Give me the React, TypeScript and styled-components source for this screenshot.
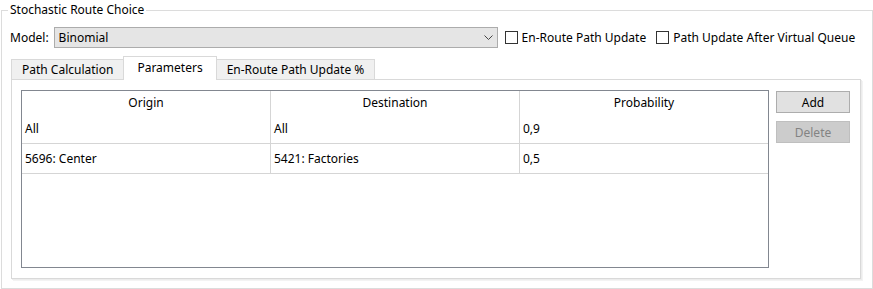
import React from 'react';
import styled, { createGlobalStyle } from 'styled-components';

const GlobalStyle = createGlobalStyle`
  html, body {
    margin: 0;
    padding: 0;
    background: #ffffff;
  }
  body {
    font-family: "Noto Sans", "Open Sans", sans-serif;
    font-size: 12px;
    color: #000;
  }
`;

const Page = styled.div`
  width: 873px;
  height: 289px;
  padding: 2px 0 0 1px;
  box-sizing: border-box;
`;

const GroupBox = styled.fieldset`
  margin: 0;
  width: 872px;
  height: 287px;
  box-sizing: border-box;
  border: 1px solid #dcdcdc;
  padding: 9px 9px 0 9px;
  display: flex;
  flex-direction: column;
`;

const Legend = styled.legend`
  padding: 0 2px;
  margin-left: -3px;
  line-height: 16px;
`;

const TopRow = styled.div`
  display: flex;
  align-items: center;
  height: 21px;
`;

const Label = styled.span`
  margin: 0 5px 0 -1px;
`;

const Combo = styled.div`
  width: 444px;
  height: 21px;
  box-sizing: border-box;
  background: #e5e5e5;
  border: 1px solid #acacac;
  display: flex;
  align-items: center;
  padding: 0 4px;
  justify-content: space-between;
`;

const Check = styled.label<{ $gap?: number }>`
  display: flex;
  align-items: center;
  margin-left: ${(p) => p.$gap ?? 7}px;
`;

const Box = styled.span`
  width: 13px;
  height: 13px;
  box-sizing: border-box;
  border: 1px solid #333;
  background: #fff;
  margin-right: 4px;
`;

const TabBar = styled.div`
  display: flex;
  align-items: flex-end;
  height: 24px;
  margin-top: 8px;
`;

const Tab = styled.div<{ $active?: boolean }>`
  height: ${(p) => (p.$active ? '24px' : '21px')};
  box-sizing: border-box;
  padding: ${(p) => (p.$active ? '0 13px 3px' : '0 10px')};
  background: ${(p) => (p.$active ? '#ffffff' : '#f0f0f0')};
  border: 1px solid #d9d9d9;
  border-bottom: ${(p) => (p.$active ? 'none' : '1px solid #d9d9d9')};
  border-left: ${(p) => (p.$active ? '1px solid #d9d9d9' : 'none')};
  border-right: ${(p) => (p.$active ? '1px solid #d9d9d9' : 'none')};
  position: relative;
  z-index: ${(p) => (p.$active ? 1 : 0)};
  display: flex;
  align-items: center;

  &:first-child {
    border-left: 1px solid #d9d9d9;
  }
  &:last-child {
    border-right: 1px solid #d9d9d9;
  }
`;

const Pane = styled.div`
  width: 850px;
  height: 200px;
  box-sizing: border-box;
  border: 1px solid #d9d9d9;
  box-shadow: 1px 1px 0 #ececec, 2px 2px 0 #f3f3f3;
  margin-top: -1px;
  padding: 10px 0 0 9px;
  display: flex;
  gap: 7px;
`;

const Table = styled.div`
  width: 748px;
  height: 178px;
  box-sizing: border-box;
  border: 1px solid #828790;
  display: grid;
  grid-template-columns: 249px 249px 248px;
  grid-template-rows: 23px 30px 30px 1fr;
`;

const Cell = styled.div<{ $head?: boolean; $last?: boolean; $line?: boolean }>`
  display: flex;
  align-items: center;
  justify-content: ${(p) => (p.$head ? 'center' : 'flex-start')};
  padding-left: ${(p) => (p.$head ? '0' : '3px')};
  border-right: ${(p) => (p.$last ? 'none' : '1px solid #d5d5d5')};
  border-bottom: ${(p) => (p.$line ? '1px solid #d5d5d5' : 'none')};
  white-space: nowrap;
`;

const Filler = styled.div`
  grid-column: 1 / -1;
`;

const Buttons = styled.div`
  display: flex;
  flex-direction: column;
  gap: 8px;
  padding-top: 1px;
`;

const Button = styled.div<{ $disabled?: boolean }>`
  width: 74px;
  height: 22px;
  box-sizing: border-box;
  border: 1px solid ${(p) => (p.$disabled ? '#bfbfbf' : '#adadad')};
  background: ${(p) => (p.$disabled ? '#cccccc' : '#e1e1e1')};
  color: ${(p) => (p.$disabled ? '#838383' : '#000')};
  display: flex;
  align-items: center;
  justify-content: center;
`;

const rows = [
  ['All', 'All', '0,9'],
  ['5696: Center', '5421: Factories', '0,5'],
];

const App: React.FC = () => (
  <Page>
    <GlobalStyle />
    <GroupBox>
      <Legend>Stochastic Route Choice</Legend>
      <TopRow>
        <Label>Model:</Label>
        <Combo>
          <span>Binomial</span>
          <svg width="9" height="6" viewBox="0 0 9 6">
            <path d="M0.5 0.5 L4.5 4.5 L8.5 0.5" fill="none" stroke="#444" strokeWidth="1" />
          </svg>
        </Combo>
        <Check>
          <Box />
          En-Route Path Update
        </Check>
        <Check $gap={10}>
          <Box />
          Path Update After Virtual Queue
        </Check>
      </TopRow>
      <TabBar>
        <Tab>Path Calculation</Tab>
        <Tab $active>Parameters</Tab>
        <Tab>En-Route Path Update %</Tab>
      </TabBar>
      <Pane>
        <Table>
          <Cell $head>Origin</Cell>
          <Cell $head>Destination</Cell>
          <Cell $head $last>Probability</Cell>
          {rows.map((r, i) =>
            r.map((c, j) => (
              <Cell key={`${i}-${j}`} $line $last={j === 2}>
                {c}
              </Cell>
            ))
          )}
          <Filler />
        </Table>
        <Buttons>
          <Button>Add</Button>
          <Button $disabled>Delete</Button>
        </Buttons>
      </Pane>
    </GroupBox>
  </Page>
);

export default App;
